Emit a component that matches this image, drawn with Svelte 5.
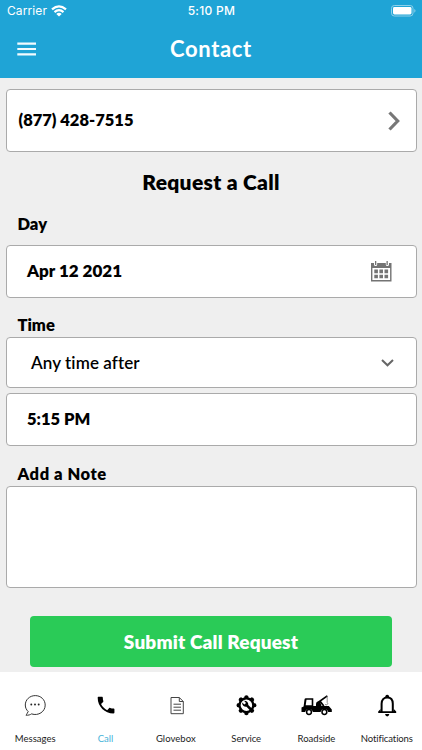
<script>
  const tabs = [
    { label: 'Messages', icon: 'messages', spacing: 0.02 },
    { label: 'Call', icon: 'call', active: true, spacing: 0 },
    { label: 'Glovebox', icon: 'glovebox', spacing: 0.05 },
    { label: 'Service', icon: 'service', spacing: -0.1 },
    { label: 'Roadside', icon: 'roadside', spacing: 0 },
    { label: 'Notifications', icon: 'bell', spacing: -0.1 }
  ];
  const teeth = [0, 45, 90, 135, 180, 225, 270, 315];
</script>

<div class="screen">
  <header>
    <div class="status">
      <div class="carrier">
        <span>Carrier</span>
        <svg width="16" height="12" viewBox="0 0 16 12" fill="none" stroke="#fff" stroke-width="2.200">
          <path d="M1 4.400Q8-1.800 15 4.400M3.500 7.100Q8 3.100 12.500 7.100" />
          <path d="M5.300 8.900Q8 6.700 10.700 8.900L8 11.600Z" fill="#fff" stroke="none" />
        </svg>
      </div>
      <span class="clock">5:10 PM</span>
      <div class="battery">
        <svg width="25" height="12" viewBox="0 0 25 12">
          <rect x=".5" y=".5" width="21.500" height="10.500" rx="2.800" fill="none" stroke="#8dd0ea" />
          <rect x="2" y="2" width="18.500" height="7.500" rx="1.400" fill="#fff" />
          <path d="M23.300 4v3.700q1.200-.6 1.200-1.850T23.300 4Z" fill="#8dd0ea" />
        </svg>
      </div>
    </div>
    <div class="nav">
      <svg width="20" height="14" viewBox="0 0 20 14" fill="#f2fbff">
        <path d="M.3.600h18.700v2.200H.3zM.3 5.900h18.700v2.200H.3zM.3 11.200h18.700v2.200H.3z" />
      </svg>
      <h1>Contact</h1>
    </div>
  </header>

  <main>
    <div class="box phone">
      <span>(877) 428-7515</span>
      <svg width="12" height="20" viewBox="0 0 12 20" fill="none" stroke="#777" stroke-width="3.200">
        <path d="M1.500 1.500 9.700 10 1.500 18.500" />
      </svg>
    </div>
    <h2>Request a Call</h2>
    <div class="label day">Day</div>
    <div class="box date">
      <span>Apr 12 2021</span>
      <svg width="21" height="21" viewBox="0 0 21 21" fill="#737373">
        <path fill-rule="evenodd" d="M0 2h3v1.500a1.600 1.600 0 0 0 3.200 0V2h8.600v1.500a1.600 1.600 0 0 0 3.200 0V2h2.500v18.500H0zM1.400 7v12.100h17.700V7z" />
        <path d="M4 0h1.300v4H4zM15.500 0h1.300v4h-1.300zM3.300 8.600h3.600v3.600H3.300zM8.400 8.600H12v3.600H8.400zM13.500 8.600h3.600v3.600h-3.600zM3.300 13.800h3.600v3.400H3.300zM8.400 13.800H12v3.400H8.400zM13.500 13.800h3.600v3.400h-3.600z" />
      </svg>
    </div>
    <div class="label time">Time</div>
    <div class="box select">
      <span>Any time after</span>
      <svg width="13" height="8" viewBox="0 0 13 8" fill="none" stroke="#666" stroke-width="2">
        <path d="M1 1 6.500 6.300 12 1" />
      </svg>
    </div>
    <div class="box hour"><span>5:15 PM</span></div>
    <div class="label note-label">Add a Note</div>
    <div class="box note"></div>
    <button><span>Submit Call Request</span></button>
  </main>

  <footer>
    {#each tabs as tab}
      <div class="tab" class:active={tab.active}>
        <svg width="32" height="26" viewBox="0 0 32 26">
          {#if tab.icon === 'messages'}
            <path d="M9.200 19.500C7.700 22.300 7.400 22.800 6.900 23.200C9.500 23.400 11.300 22.700 12.500 21.900C19.500 24.200 26.200 19.600 26.200 13.100C26.200 7.600 21.700 3.600 16.300 3.600C10.600 3.600 6.300 7.800 6.300 13C6.300 15.800 7.500 18 9.200 19.500Z" fill="none" stroke="#333" stroke-width="1" />
            <g fill="#222"><circle cx="12.300" cy="12.500" r=".95" /><circle cx="16" cy="12.500" r=".95" /><circle cx="19.700" cy="12.500" r=".95" /></g>
          {:else if tab.icon === 'call'}
            <path transform="translate(5.900 2) scale(.93)" d="M6.620 10.790c1.440 2.830 3.760 5.140 6.590 6.590l2.200-2.200c.27-.27.670-.36 1.020-.24 1.120.37 2.330.57 3.570.57.550 0 1 .450 1 1V20c0 .550-.450 1-1 1-9.390 0-17-7.610-17-17 0-.550.450-1 1-1h3.500c.550 0 1 .450 1 1 0 1.250.2 2.450.57 3.570.110.350.030.740-.250 1.020l-2.200 2.200z" />
          {:else if tab.icon === 'glovebox'}
            <g fill="none" stroke="#444" stroke-width="1">
              <path d="M11 5.500h8.300l4 4v12.200H11zM19.300 5.500v4h4" />
              <path d="M13.500 12.200H21M13.500 15.200H21M13.500 18.200H21" />
            </g>
          {:else if tab.icon === 'service'}
            <g transform="translate(16.400 13.200)">
              {#each teeth as angle}
                <path transform="rotate({angle})" d="M-2.300-7 -1.800-9.300Q0-10.600 1.800-9.300L2.300-7Z" />
              {/each}
              <circle r="6.900" fill="none" stroke="#000" stroke-width="2.300" />
              <path d="M-4.300-2.600A3.900 3.900 0 0 0 .1 1.600L4.200 5.700 6 3.900 1.900-.2A3.900 3.900 0 0 0-2.400-4.500L-.4-2.300-2 -.7Z" />
            </g>
          {:else if tab.icon === 'roadside'}
            <path fill-rule="evenodd" d="M4.500 7.500Q4.600 6.200 6 6.200h7.300V14h15.500l3 3.600v2.400h-3.600a3.900 3.900 0 0 0-7.600 0h-7.800a3.900 3.900 0 0 0-7.600 0H1.500v-4.500l2.100-1.100zM6.500 7.800 5.700 13.200h6V7.800z" />
            <path d="M16 14.500v-2.700q0-2 2-2.200l2.200.3 1.500 4.600z" />
            <path d="M18 10.500 27.300 3.900M20.300 9.600 23.800 14" fill="none" stroke="#000" stroke-width="1.700" />
            <path d="M27.200 3.900v6.600q1.400 1.500-.2 2.300t-1.600-.8" fill="none" stroke="#777" stroke-width=".8" />
            <circle cx="9" cy="20" r="2.400" fill="#fff" stroke="#000" stroke-width="1.500" />
            <circle cx="24.400" cy="20" r="2.400" fill="#fff" stroke="#000" stroke-width="1.500" />
          {:else}
            <path d="M10.600 20V11.800C10.600 7.900 12.800 5.500 16.200 5.500S21.800 7.900 21.800 11.800V20" fill="none" stroke="#000" stroke-width="2" />
            <path d="M14.300 5.200V4q1.900-2.700 3.800 0v1.200zM9.600 17 7.200 19.400v1.700h18v-1.700L22.800 17v2.200H9.600zM14 22.100h4.400q-.5 2.300-2.200 2.300t-2.200-2.300z" />
          {/if}
        </svg>
        <span style="letter-spacing: {tab.spacing}px">{tab.label}</span>
      </div>
    {/each}
  </footer>
</div>

<style>
  :global(body) { margin: 0; }
  * { box-sizing: border-box; }
  .screen {
    width: 422px;
    height: 750px;
    display: flex;
    flex-direction: column;
    overflow: hidden;
    background: #efefef;
    color: #000;
    font-family: Lato, "Open Sans", sans-serif;
    font-variant-ligatures: none;
    white-space: nowrap;
  }
  svg { display: block; flex: none; }
  header { height: 78px; background: #1fa4d6; color: #fff; }
  .status {
    height: 22px;
    display: grid;
    grid-template-columns: 1fr auto 1fr;
    align-items: center;
    padding: 0 6px 0 7px;
    font: 12px/22px Inter, sans-serif;
  }
  .carrier { display: flex; align-items: center; gap: 4px; letter-spacing: .1px; }
  .carrier svg { margin-top: -1px; }
  .clock { font-weight: 500; font-size: 12px; letter-spacing: .3px; }
  .battery { display: flex; justify-content: flex-end; margin-top: -1px; }
  .nav {
    display: grid;
    grid-template-columns: 1fr auto 1fr;
    align-items: center;
    height: 54px;
    padding: 0 17px;
  }
  h1 { margin: 0; font-size: 22px; line-height: 30px; font-weight: 700; letter-spacing: .65px; }
  main { height: 594px; padding: 11px 5.500px 0; display: flex; flex-direction: column; }
  .box {
    flex: none;
    display: flex;
    align-items: center;
    justify-content: space-between;
    border: 1px solid #aaa;
    border-radius: 4px;
    background: #fff;
    font-size: 17px;
    font-weight: 800;
  }
  .phone { height: 63px; padding: 0 16px 0 12px; font-size: 16.500px; }
  .phone span { margin-top: -1px; }
  h2 { margin: 16px 0 0; text-align: center; font-size: 21px; line-height: 28px; font-weight: 800; letter-spacing: .3px; }
  .label { margin-left: 12px; height: 20px; line-height: 20px; font-size: 16.500px; font-weight: 800; }
  .day { margin-top: 18px; }
  .date { height: 53px; margin-top: 11px; padding: 0 24px 0 20.500px; }
  .date span, .hour span { margin-top: -2px; }
  .date svg { margin-top: -1px; }
  .time { margin-top: 17px; }
  .select { height: 51px; margin-top: 2px; padding: 0 22px 0 24.500px; font-weight: 600; letter-spacing: .1px; }
  .hour { height: 53px; margin-top: 5px; padding: 0 20.500px; font-size: 16.500px; }
  .note-label { margin-top: 18px; letter-spacing: .55px; }
  .note { height: 102px; margin-top: 2px; }
  button {
    width: 362px;
    height: 51px;
    margin: 28px 0 0 24.500px;
    padding: 0;
    flex: none;
    border: 0;
    border-radius: 4px;
    background: #2acb57;
    color: #fff;
    font: 800 19px/51px Lato, sans-serif;
    letter-spacing: .15px;
  }
  footer { height: 78px; display: flex; background: #fff; }
  .tab {
    flex: 1 0 0;
    min-width: 0;
    display: flex;
    flex-direction: column;
    align-items: center;
    padding-top: 20px;
    font-size: 9.500px;
    line-height: 14px;
    color: #222;
  }
  .tab span { margin-top: 14px; }
  .active { color: #46b3d9; }
</style>
